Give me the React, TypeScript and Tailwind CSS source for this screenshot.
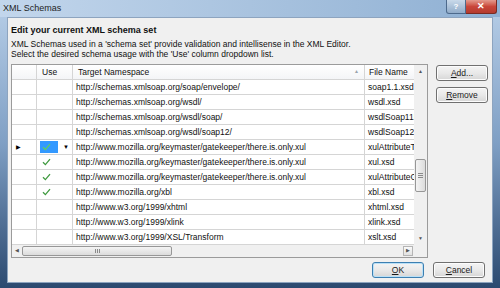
import React from "react";

const rows = [
  { ns: "http://schemas.xmlsoap.org/soap/envelope/", file: "soap1.1.xsd", use: false },
  { ns: "http://schemas.xmlsoap.org/wsdl/", file: "wsdl.xsd", use: false },
  { ns: "http://schemas.xmlsoap.org/wsdl/soap/", file: "wsdlSoap11Binding.xsd", use: false },
  { ns: "http://schemas.xmlsoap.org/wsdl/soap12/", file: "wsdlSoap12Binding.xsd", use: false },
  { ns: "http://www.mozilla.org/keymaster/gatekeeper/there.is.only.xul", file: "xulAttributeTypes.xsd", use: true, current: true },
  { ns: "http://www.mozilla.org/keymaster/gatekeeper/there.is.only.xul", file: "xul.xsd", use: true },
  { ns: "http://www.mozilla.org/keymaster/gatekeeper/there.is.only.xul", file: "xulAttributeGroups.xsd", use: true },
  { ns: "http://www.mozilla.org/xbl", file: "xbl.xsd", use: true },
  { ns: "http://www.w3.org/1999/xhtml", file: "xhtml.xsd", use: false },
  { ns: "http://www.w3.org/1999/xlink", file: "xlink.xsd", use: false },
  { ns: "http://www.w3.org/1999/XSL/Transform", file: "xslt.xsd", use: false },
];

function Check({ color = "#3f9a3f" }: { color?: string }) {
  return (
    <svg width="9" height="8" viewBox="0 0 9 8">
      <path d="M1 4.2 L3.4 6.6 L8 1.2" stroke={color} strokeWidth="1.3" fill="none" />
    </svg>
  );
}

function Btn({ u, rest, def }: { u: string; rest: string; def?: boolean }) {
  return (
    <div
      className={`w-[52px] h-[16px] flex items-center justify-center rounded-[3px] border text-[8.5px] text-[#1a1a1a] bg-gradient-to-b from-[#f4f4f4] via-[#e9e9e9] to-[#d6d6d6] ${
        def ? "border-[#3c7fb1] shadow-[inset_0_0_0_1px_#b9e0f7]" : "border-[#707070] shadow-[inset_0_0_0_1px_#fcfcfc]"
      }`}
    >
      <span>
        <span className="underline">{u}</span>
        {rest}
      </span>
    </div>
  );
}

export default function App() {
  return (
    <div
      className="w-[500px] h-[288px] flex flex-col bg-gradient-to-b from-[#b8cfe8] via-[#7f9fc4] to-[#2c4a70] overflow-hidden"
      style={{ fontFamily: '"Liberation Sans", Arial, sans-serif' }}
    >
      {/* title bar */}
      <div className="h-[17px] flex items-start bg-gradient-to-r from-[#c2d6ec] via-[#a9c3df] to-[#8fb0d3]">
        <div className="pl-[3px] pt-[2px] text-[9px] leading-[12px] text-[#1e1e1e]">XML Schemas</div>
        <div className="ml-auto mr-[3px] flex">
          <div className="w-[20px] h-[14px] flex items-center justify-center rounded-bl-[3px] border border-t-0 border-[#4d6a8c] bg-gradient-to-b from-[#c9d9ea] to-[#91acc9] text-[8px] font-bold text-white">
            ?
          </div>
          <div className="w-[31px] h-[14px] flex items-center justify-center rounded-br-[3px] border border-t-0 border-l-0 border-[#7a2a22] bg-gradient-to-b from-[#e39a8e] via-[#c9463a] to-[#b43b2e] text-[9px] font-bold text-white">
            ✕
          </div>
        </div>
      </div>

      {/* client */}
      <div className="mx-[7px] h-[266px] bg-[#f0f0f0] border border-[#8da4bf] flex flex-col pl-[3px] pr-[7px] pt-[6px]">
        <div className="h-[13px] text-[9px] font-bold leading-[13px] text-[#111]">Edit your current XML schema set</div>
        <div className="mt-[2px] text-[8.5px] leading-[10px] text-[#111]">
          <div>XML Schemas used in a 'schema set' provide validation and intellisense in the XML Editor.</div>
          <div>Select the desired schema usage with the 'Use' column dropdown list.</div>
        </div>

        <div className="mt-[5px] flex gap-[8px]">
          {/* grid */}
          <div className="w-[417px] h-[194px] border border-[#9b9b9b] bg-white flex flex-col text-[8.5px] text-[#111]">
            <div className="flex">
              <div className="w-[402px] flex flex-col">
                {/* header */}
                <div className="h-[15px] flex border-b border-[#d5d5d5] bg-gradient-to-b from-white to-[#f4f5f7]">
                  <div className="w-[25px] border-r border-[#d5d5d5]" />
                  <div className="w-[36px] border-r border-[#d5d5d5] pl-[5px] flex items-center">Use</div>
                  <div className="w-[292px] border-r border-[#d5d5d5] pl-[5px] pr-[5px] flex items-center justify-between">
                    <span>Target Namespace</span>
                    <span className="text-[5px] text-[#9aa3ad]">▲</span>
                  </div>
                  <div className="w-[49px] pl-[4px] flex items-center whitespace-nowrap overflow-hidden">File Name</div>
                </div>
                {rows.map((r, i) => (
                  <div key={i} className="h-[15px] flex border-b border-[#d5d5d5]">
                    <div className="w-[25px] border-r border-[#d5d5d5] flex items-center pl-[4px]">
                      {r.current && <span className="text-[6px] text-black">▶</span>}
                    </div>
                    <div className="w-[36px] border-r border-[#d5d5d5] flex items-center pl-[3px]">
                      {r.current ? (
                        <>
                          <div className="w-[18px] h-[12px] bg-[#3399ff] flex items-center pl-[2px]">
                            <Check color="#5fd05f" />
                          </div>
                          <span className="ml-[5px] text-[6px] text-black">▼</span>
                        </>
                      ) : (
                        r.use && (
                          <div className="pl-[2px]">
                            <Check />
                          </div>
                        )
                      )}
                    </div>
                    <div className="w-[292px] border-r border-[#d5d5d5] pl-[3px] flex items-center whitespace-nowrap overflow-hidden">
                      {r.ns}
                    </div>
                    <div className="w-[49px] pl-[3px] flex items-center whitespace-nowrap overflow-hidden">{r.file}</div>
                  </div>
                ))}
              </div>
              {/* vertical scrollbar */}
              <div className="w-[13px] h-[180px] bg-[#f0f0f0] flex flex-col items-center">
                <div className="h-[13px] flex items-center text-[5px] text-[#555]">▲</div>
                <div className="h-[81px]" />
                <div className="w-[11px] h-[33px] rounded-[2px] border border-[#979797] bg-gradient-to-r from-[#f4f4f4] to-[#dcdcdc] flex items-center justify-center">
                  <div className="flex flex-col gap-[1px]">
                    <div className="w-[5px] h-[1px] bg-[#8a8a8a]" />
                    <div className="w-[5px] h-[1px] bg-[#8a8a8a]" />
                    <div className="w-[5px] h-[1px] bg-[#8a8a8a]" />
                  </div>
                </div>
                <div className="flex-1" />
                <div className="h-[12px] flex items-center text-[5px] text-[#555]">▼</div>
              </div>
            </div>
            {/* horizontal scrollbar */}
            <div className="flex h-[12px] bg-[#f0f0f0]">
              <div className="w-[402px] flex items-center">
                <div className="w-[10px] flex justify-center text-[5px] text-[#555]">◀</div>
                <div className="w-[150px] h-[10px] rounded-[2px] border border-[#979797] bg-gradient-to-b from-[#f4f4f4] to-[#dcdcdc] flex items-center justify-center gap-[1px]">
                  <div className="w-[1px] h-[4px] bg-[#8a8a8a]" />
                  <div className="w-[1px] h-[4px] bg-[#8a8a8a]" />
                  <div className="w-[1px] h-[4px] bg-[#8a8a8a]" />
                </div>
                <div className="flex-1" />
                <div className="w-[10px] h-[10px] mr-[1px] border border-[#b5b5b5] bg-gradient-to-b from-[#fafafa] to-[#e2e2e2] flex items-center justify-center text-[5px] text-[#555]">
                  ▶
                </div>
              </div>
              <div className="w-[13px]" />
            </div>
          </div>

          {/* side buttons */}
          <div className="flex flex-col gap-[6px] pt-[1px]">
            <Btn u="A" rest="dd..." />
            <Btn u="R" rest="emove" />
          </div>
        </div>

        <div className="mt-[4px] flex justify-end gap-[9px]">
          <Btn u="O" rest="K" def />
          <Btn u="C" rest="ancel" />
        </div>
      </div>
    </div>
  );
}
